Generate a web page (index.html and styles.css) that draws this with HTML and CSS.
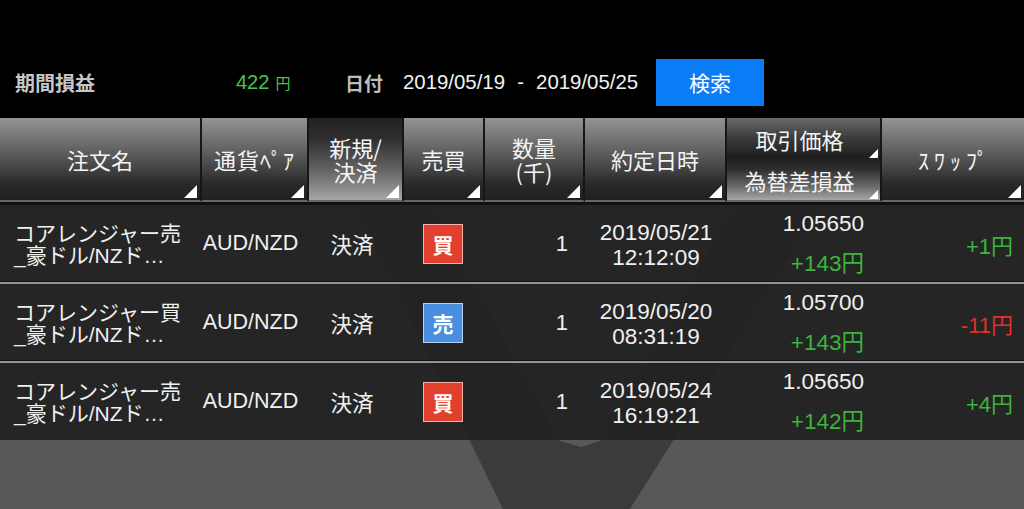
FILE: index.html
```html
<!DOCTYPE html>
<html lang="ja">
<head>
<meta charset="utf-8">
<title>約定履歴</title>
<link rel="stylesheet" href="styles.css">
</head>
<body>
<div class="page">
  <header class="topbar">
    <div class="pl-label">期間損益</div>
    <div class="pl-value">422<span class="yen">円</span></div>
    <div class="date-label">日付</div>
    <div class="date-range"><span>2019/05/19</span><span class="dash">-</span><span>2019/05/25</span></div>
    <button class="search">検索</button>
  </header>

  <div class="thead">
    <div class="th tri">注文名</div>
    <div class="th tri narrow-kana">通貨ﾍﾟｱ</div>
    <div class="th tri sel">新規/<br>決済</div>
    <div class="th tri">売買</div>
    <div class="th tri">数量<br>(千)</div>
    <div class="th tri">約定日時</div>
    <div class="th split">
      <div class="half tri small">取引価格</div>
      <div class="half tri small sel">為替差損益</div>
    </div>
    <div class="th tri swap">ｽﾜｯﾌﾟ</div>
  </div>

  <div class="tbody">
    <svg class="wm" viewBox="0 0 1024 304" width="1024" height="304" aria-hidden="true">
      <polygon points="355,0 430,0 560,236 581,242 600,236 735,0 822,0 630,304 503,304" fill="#000" fill-opacity="0.32"/>
    </svg>

    <div class="row">
      <div class="c-name"><span>コアレンジャー売</span><span>_豪ドル/NZド…</span></div>
      <div class="c-pair">AUD/NZD</div>
      <div class="c-type">決済</div>
      <div class="c-side"><span class="badge buy">買</span></div>
      <div class="c-qty">1</div>
      <div class="c-date"><span>2019/05/21</span><span>12:12:09</span></div>
      <div class="c-price"><span>1.05650</span><span class="pos">+143円</span></div>
      <div class="c-swap pos">+1円</div>
    </div>

    <div class="row">
      <div class="c-name"><span>コアレンジャー買</span><span>_豪ドル/NZド…</span></div>
      <div class="c-pair">AUD/NZD</div>
      <div class="c-type">決済</div>
      <div class="c-side"><span class="badge sell">売</span></div>
      <div class="c-qty">1</div>
      <div class="c-date"><span>2019/05/20</span><span>08:31:19</span></div>
      <div class="c-price"><span>1.05700</span><span class="pos">+143円</span></div>
      <div class="c-swap neg">-11円</div>
    </div>

    <div class="row">
      <div class="c-name"><span>コアレンジャー売</span><span>_豪ドル/NZド…</span></div>
      <div class="c-pair">AUD/NZD</div>
      <div class="c-type">決済</div>
      <div class="c-side"><span class="badge buy">買</span></div>
      <div class="c-qty">1</div>
      <div class="c-date"><span>2019/05/24</span><span>16:19:21</span></div>
      <div class="c-price"><span>1.05650</span><span class="pos">+142円</span></div>
      <div class="c-swap pos">+4円</div>
    </div>
  </div>
</div>
</body>
</html>
```

FILE: styles.css
```css
* {
  box-sizing: border-box;
  margin: 0;
  padding: 0;
}

html, body {
  width: 1024px;
  height: 509px;
  overflow: hidden;
  background: #000;
}

body {
  font-family: "Liberation Sans", "Noto Sans CJK JP", sans-serif;
  color: #eeeeee;
}

.page {
  display: flex;
  flex-direction: column;
  height: 509px;
}

/* ---------- top bar ---------- */
.topbar {
  flex: none;
  height: 118px;
  display: flex;
  align-items: center;
  padding: 46px 0 0 15px;
}

.pl-label {
  width: 221px;
  font-size: 20px;
  font-weight: bold;
  color: #c6c6c6;
  font-family: "Noto Sans CJK JP", sans-serif;
}

.pl-value {
  width: 109px;
  font-size: 20px;
  color: #46c646;
}

.pl-value .yen {
  font-size: 15px;
  margin-left: 6px;
  font-family: "Noto Sans CJK JP", sans-serif;
}

.date-label {
  width: 58px;
  font-size: 19px;
  font-weight: bold;
  color: #bdbdbd;
  font-family: "Noto Sans CJK JP", sans-serif;
}

.date-range {
  width: 253px;
  display: flex;
  font-size: 20.4px;
  color: #f2f2f2;
}

.date-range .dash {
  width: 31px;
  text-align: center;
}

.search {
  width: 108px;
  height: 47px;
  border: none;
  background: #0a7cf6;
  color: #ffffff;
  font-size: 21px;
  font-family: "Noto Sans CJK JP", sans-serif;
  display: flex;
  align-items: center;
  justify-content: center;
}

/* ---------- header ---------- */
.thead,
.row {
  display: grid;
  grid-template-columns: 202px 107px 95px 81px 100px 142px 155px 142px;
}

.thead {
  flex: none;
  height: 87px;
  border-bottom: 3px solid #121212;
}

.th {
  position: relative;
  border-right: 2px solid #161616;
  border-bottom: 2px solid #666666;
  background: linear-gradient(#939393, #5a5a5a 45%, #2a2a2a 80%, #202020);
  display: flex;
  align-items: center;
  justify-content: center;
  text-align: center;
  font-family: "Noto Sans CJK JP", sans-serif;
  font-size: 22px;
  line-height: 24px;
  color: #f4f4f4;
}

.th:last-child {
  border-right: none;
}

.th.sel,
.half.sel {
  background: linear-gradient(#222222, #2e2e2e 25%, #666666 65%, #a6a6a6);
}

.narrow-kana {
  letter-spacing: 1px;
}

.swap {
  letter-spacing: 5px;
  padding-left: 5px;
}

.th.split {
  flex-direction: column;
  align-items: stretch;
  background: #202020;
}

.half {
  position: relative;
  flex: 1;
  display: flex;
  align-items: center;
  justify-content: center;
  padding-right: 8px;
  background: linear-gradient(#6a6a6a, #3a3a3a 50%, #1c1c1c);
}

.tri::after {
  content: "";
  position: absolute;
  right: 3px;
  bottom: 2px;
  width: 13px;
  height: 13px;
  background: #ffffff;
  clip-path: polygon(100% 0, 100% 100%, 0 100%);
}

.tri.small::after {
  width: 9px;
  height: 9px;
  right: 2px;
  bottom: 1px;
}

/* ---------- body ---------- */
.tbody {
  position: relative;
  flex: 1;
  background: #585858;
}

.wm {
  position: absolute;
  left: 0;
  top: 0;
}

.row {
  position: relative;
  height: 77px;
  background: rgba(33, 33, 33, 0.93);
  font-size: 21.5px;
  color: #f0f0f0;
}

.row + .row {
  height: 79px;
  border-top: 2px solid #939393;
  box-shadow: 0 -1px 0 #121212;
}

.c-name {
  display: flex;
  flex-direction: column;
  justify-content: center;
  padding-left: 14px;
  font-size: 21px;
  line-height: 23px;
  white-space: nowrap;
  overflow: hidden;
  font-family: "Noto Sans CJK JP", sans-serif;
}

.c-name span:last-child {
  font-family: "Liberation Sans", "Noto Sans CJK JP", sans-serif;
}

.c-pair,
.c-type,
.c-side {
  display: flex;
  align-items: center;
  justify-content: center;
}

.c-pair {
  padding-right: 10px;
}

.c-type {
  padding-right: 9px;
  font-family: "Noto Sans CJK JP", sans-serif;
  font-size: 21.5px;
}

.c-side {
  padding-right: 3px;
}

.badge {
  width: 40px;
  height: 40px;
  display: flex;
  align-items: center;
  justify-content: center;
  font-family: "Noto Sans CJK JP", sans-serif;
  font-size: 21px;
  font-weight: bold;
  color: #ffffff;
}

.badge.buy {
  background: #e2402f;
  border: 1.5px solid #f2b3ab;
}

.badge.sell {
  background: #4a8ee0;
  border: 1.5px solid #b6d2f2;
}

.c-qty {
  display: flex;
  align-items: center;
  justify-content: flex-end;
  padding-right: 17px;
  font-size: 22px;
}

.c-date {
  display: flex;
  flex-direction: column;
  align-items: center;
  justify-content: center;
  font-size: 22.5px;
  line-height: 25px;
  padding-top: 2px;
}

.c-price {
  display: flex;
  flex-direction: column;
  align-items: flex-end;
  justify-content: space-between;
  padding: 7px 18px 6px 0;
  font-size: 22.5px;
  line-height: 24px;
}

.c-swap {
  display: flex;
  align-items: center;
  justify-content: flex-end;
  padding-right: 11px;
  font-size: 22px;
}

.pos {
  color: #3cb43c;
}

.neg {
  color: #dc3428;
}
```
